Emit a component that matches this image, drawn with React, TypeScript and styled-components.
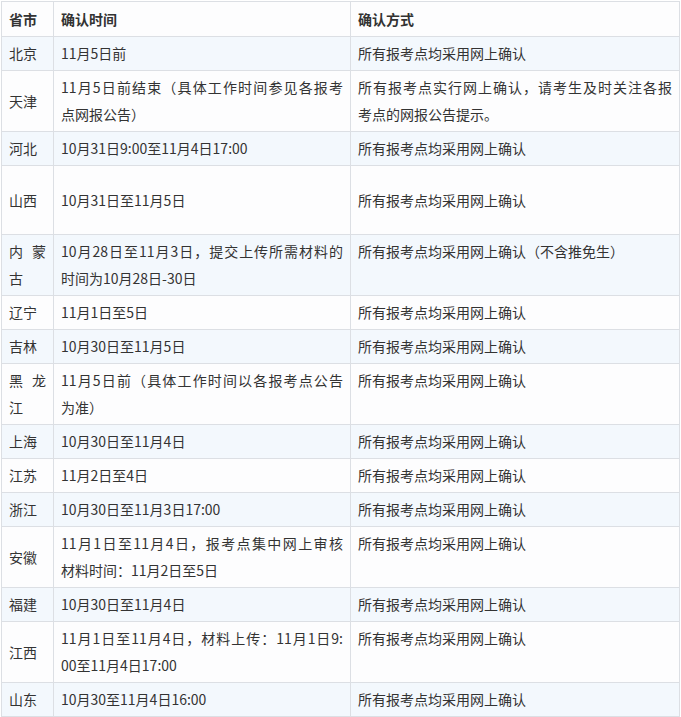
import styled, { createGlobalStyle } from "styled-components";

const GlobalStyle = createGlobalStyle`
  html, body {
    margin: 0;
    padding: 0;
    background: #ffffff;
  }
  body {
    font-family: "Noto Sans CJK SC", "Noto Sans", sans-serif;
    color: #333333;
  }
`;

type Row = {
  province: string[];
  time: string[];
  method: string[];
  tall?: boolean;
};

const ROWS: Row[] = [
  { province: ["北京"], time: ["11月5日前"], method: ["所有报考点均采用网上确认"] },
  {
    province: ["天津"],
    time: ["11月5日前结束（具体工作时间参见各报考", "点网报公告）"],
    method: ["所有报考点实行网上确认，请考生及时关注各报", "考点的网报公告提示。"],
  },
  { province: ["河北"], time: ["10月31日9:00至11月4日17:00"], method: ["所有报考点均采用网上确认"] },
  { province: ["山西"], time: ["10月31日至11月5日"], method: ["所有报考点均采用网上确认"], tall: true },
  {
    province: ["内蒙", "古"],
    time: ["10月28日至11月3日，提交上传所需材料的", "时间为10月28日-30日"],
    method: ["所有报考点均采用网上确认（不含推免生）"],
  },
  { province: ["辽宁"], time: ["11月1日至5日"], method: ["所有报考点均采用网上确认"] },
  { province: ["吉林"], time: ["10月30日至11月5日"], method: ["所有报考点均采用网上确认"] },
  {
    province: ["黑龙", "江"],
    time: ["11月5日前（具体工作时间以各报考点公告", "为准）"],
    method: ["所有报考点均采用网上确认"],
  },
  { province: ["上海"], time: ["10月30日至11月4日"], method: ["所有报考点均采用网上确认"] },
  { province: ["江苏"], time: ["11月2日至4日"], method: ["所有报考点均采用网上确认"] },
  { province: ["浙江"], time: ["10月30日至11月3日17:00"], method: ["所有报考点均采用网上确认"] },
  {
    province: ["安徽"],
    time: ["11月1日至11月4日，报考点集中网上审核", "材料时间：11月2日至5日"],
    method: ["所有报考点均采用网上确认"],
  },
  { province: ["福建"], time: ["10月30日至11月4日"], method: ["所有报考点均采用网上确认"] },
  {
    province: ["江西"],
    time: ["11月1日至11月4日，材料上传：11月1日9:", "00至11月4日17:00"],
    method: ["所有报考点均采用网上确认"],
  },
  { province: ["山东"], time: ["10月30至11月4日16:00"], method: ["所有报考点均采用网上确认"] },
];

const Page = styled.div`
  padding: 1px 0 0 1px;
`;

const Table = styled.table`
  width: 678px;
  border-collapse: collapse;
  table-layout: fixed;
  font-size: 14px;
  line-height: 27px;
`;

const HeadCell = styled.th`
  height: 28px;
  padding: 3px 7px;
  border: 1px solid #dcdfe4;
  background: #fdfdfe;
  font-weight: bold;
  text-align: left;
  vertical-align: middle;
  white-space: nowrap;
`;

const BodyRow = styled.tr<{ $striped: boolean; $tall?: boolean }>`
  background: ${(p) => (p.$striped ? "#f3f8fd" : "#fdfdfe")};
  height: ${(p) => (p.$tall ? "69px" : "auto")};
`;

const Cell = styled.td<{ $top?: boolean }>`
  padding: 3px 7px;
  border: 1px solid #dcdfe4;
  vertical-align: ${(p) => (p.$top ? "top" : "middle")};
  text-align: left;
`;

const Line = styled.span<{ $full: boolean }>`
  display: block;
  white-space: nowrap;
  text-align: ${(p) => (p.$full ? "justify" : "left")};
  text-align-last: ${(p) => (p.$full ? "justify" : "left")};
  text-justify: inter-character;
`;

const Lines = ({ items }: { items: string[] }) => (
  <>
    {items.map((text, i) => (
      <Line key={i} $full={i < items.length - 1}>
        {text}
      </Line>
    ))}
  </>
);

const App = () => {
  return (
    <Page>
      <GlobalStyle />
      <Table>
        <colgroup>
          <col style={{ width: 52 }} />
          <col style={{ width: 297 }} />
          <col style={{ width: 329 }} />
        </colgroup>
        <thead>
          <tr>
            <HeadCell>省市</HeadCell>
            <HeadCell>确认时间</HeadCell>
            <HeadCell>确认方式</HeadCell>
          </tr>
        </thead>
        <tbody>
          {ROWS.map((row, i) => (
            <BodyRow key={row.province.join("")} $striped={i % 2 === 0} $tall={row.tall}>
              <Cell>
                <Lines items={row.province} />
              </Cell>
              <Cell>
                <Lines items={row.time} />
              </Cell>
              <Cell $top={!row.tall}>
                <Lines items={row.method} />
              </Cell>
            </BodyRow>
          ))}
        </tbody>
      </Table>
    </Page>
  );
};

export default App;
